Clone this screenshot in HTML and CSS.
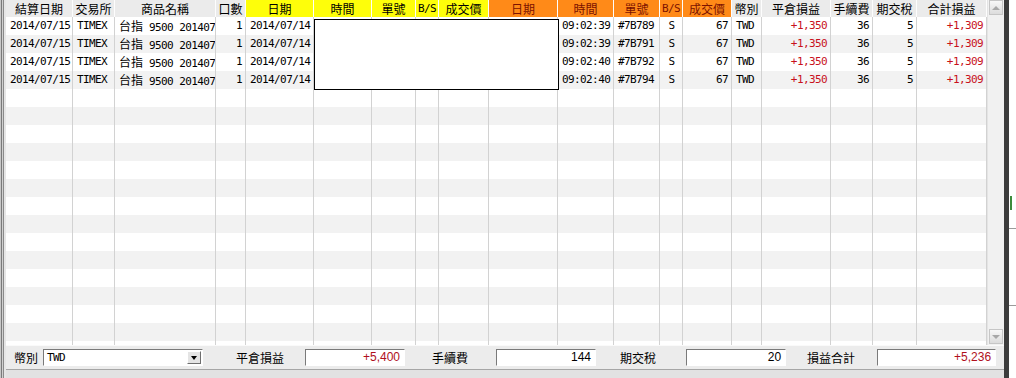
FILE: index.html
```html
<!DOCTYPE html>
<html lang="zh-TW">
<head>
  <meta charset="UTF-8" />
  <title>平倉明細</title>
  <link rel="stylesheet" href="styles.css">
</head>
<body>
  <div class="edge-left"></div>
  <div class="app">
    <div class="grid-area">
      <div class="grid" id="grid">
        <div class="row head">
          <div class="cell">結算日期</div>
          <div class="cell">交易所</div>
          <div class="cell">商品名稱</div>
          <div class="cell">口數</div>
          <div class="cell yel">日期</div>
          <div class="cell yel">時間</div>
          <div class="cell yel">單號</div>
          <div class="cell yel mono">B/S</div>
          <div class="cell yel">成交價</div>
          <div class="cell org">日期</div>
          <div class="cell org">時間</div>
          <div class="cell org">單號</div>
          <div class="cell org mono">B/S</div>
          <div class="cell org">成交價</div>
          <div class="cell">幣別</div>
          <div class="cell">平倉損益</div>
          <div class="cell">手續費</div>
          <div class="cell">期交稅</div>
          <div class="cell">合計損益</div>
        </div>
        <div id="rows"></div>
        <div class="blank-box"></div>
      </div>
      <div class="vscroll">
        <div class="sbtn up"><span class="tri-up"></span></div>
        <div class="strack"></div>
        <div class="sbtn down"><span class="tri-down"></span></div>
      </div>
    </div>
    <div class="footer">
      <span class="lbl first">幣別</span>
      <div class="combo">
        <span class="combo-text">TWD</span>
        <span class="combo-btn"><span class="tri-down dark"></span></span>
      </div>
      <span class="lbl l-pnl">平倉損益</span>
      <div class="box red w100 i-pnl">+5,400</div>
      <span class="lbl l-fee">手續費</span>
      <div class="box w100 i-fee">144</div>
      <span class="lbl l-tax">期交稅</span>
      <div class="box w100 i-tax">20</div>
      <span class="lbl l-sum">損益合計</span>
      <div class="box red w119 i-sum">+5,236</div>
    </div>
    <div class="status"></div>
  </div>
  <div class="edge-right">
    <div class="side-pane"><span class="mark"></span></div>
  </div>

  <script>
    // 平倉資料
    const trades = [
      { time: '09:02:39', no: '#7B789' },
      { time: '09:02:39', no: '#7B791' },
      { time: '09:02:40', no: '#7B792' },
      { time: '09:02:40', no: '#7B794' }
    ];
    const rows = document.getElementById('rows');
    for (let i = 0; i < 19; i++) {
      const t = trades[i];
      const div = document.createElement('div');
      div.className = 'row' + (i % 2 ? ' alt' : '');
      if (t) {
        div.innerHTML = `
          <div class="cell">2014/07/15</div>
          <div class="cell">TIMEX</div>
          <div class="cell"><span class="cjk">台指</span> 9500 201407</div>
          <div class="cell r">1</div>
          <div class="cell">2014/07/14</div>
          <div class="cell"></div>
          <div class="cell"></div>
          <div class="cell"></div>
          <div class="cell"></div>
          <div class="cell"></div>
          <div class="cell">${t.time}</div>
          <div class="cell">${t.no}</div>
          <div class="cell c">S</div>
          <div class="cell r">67</div>
          <div class="cell">TWD</div>
          <div class="cell r red">+1,350</div>
          <div class="cell r">36</div>
          <div class="cell r">5</div>
          <div class="cell r red">+1,309</div>`;
      } else {
        div.innerHTML = '<div class="cell"></div>'.repeat(19);
      }
      rows.appendChild(div);
    }
  </script>
</body>
</html>
```

FILE: styles.css
```css
html, body {
  margin: 0;
  padding: 0;
}
body {
  width: 1016px;
  height: 378px;
  overflow: hidden;
  display: flex;
  background-color: #dedede;
  font-family: "DejaVu Sans Mono", "Noto Sans CJK TC", monospace;
  font-size: 11px;
  color: #000;
}

/* 左右邊框 */
.edge-left {
  width: 6px;
  flex: none;
  background: linear-gradient(to right,
    #c8c8c8 0, #c8c8c8 1px,
    #7a7a7a 1px, #7a7a7a 2px,
    #d0d0d0 2px, #d0d0d0 3px,
    #8a8a8a 3px, #8a8a8a 4px,
    #e6e6e6 4px, #e6e6e6 6px);
}
.edge-right {
  flex: 1;
  display: flex;
  background: #3c3c3c;
  padding-left: 5px;
}
.side-pane {
  flex: 1;
  position: relative;
  background: linear-gradient(to bottom,
    #ffffff 0, #ffffff 228px,
    #9a9a9a 228px, #9a9a9a 229px,
    #ffffff 229px, #ffffff 305px,
    #9a9a9a 305px, #9a9a9a 306px,
    #ffffff 306px);
}
.side-pane .mark {
  position: absolute;
  left: 1px;
  top: 196px;
  width: 2px;
  height: 14px;
  background: #3c8c3c;
}

.app {
  width: 998px;
  flex: none;
  display: flex;
  flex-direction: column;
}

/* 表格區 */
.grid-area {
  height: 345px;
  display: flex;
  background: #fff;
}
.grid {
  width: 981px;
  position: relative;
  overflow: hidden;
}
.row {
  display: grid;
  grid-template-columns: 67px 42px 101px 30px 68px 58px 44px 23px 50px 69px 56px 46px 23px 49px 30px 69px 42px 44px 70px;
  height: 18px;
  background: #fff;
}
.row.alt {
  background: #f2f2f2;
}
.cell {
  box-sizing: border-box;
  border-right: 1px solid #d2d2d2;
  padding: 0 3px 0 4px;
  line-height: 18px;
  white-space: nowrap;
  overflow: hidden;
  letter-spacing: -0.6px;
}
.cell.r { text-align: right; }
.cell.c { text-align: center; }
.cell.red { color: #c8101c; }
.cjk {
  font-family: "Noto Sans CJK TC", sans-serif;
  font-size: 12px;
  letter-spacing: 0;
}

.row.head {
  height: 17px;
  background: #ebebeb;
}
.row.head .cell {
  font-family: "Noto Sans CJK TC", sans-serif;
  font-size: 12px;
  letter-spacing: 0;
  line-height: 17px;
  text-align: center;
  padding: 0;
  border-right: 1px solid #fdfdfd;
}
.row.head .cell.mono {
  font-family: "DejaVu Sans Mono", monospace;
  font-size: 11px;
  letter-spacing: -0.6px;
}
.row.head .yel {
  background: #fefe0a;
}
.row.head .org {
  background: #ff8a18;
  color: #7c1200;
}

.blank-box {
  position: absolute;
  left: 308px;
  top: 19px;
  width: 245px;
  height: 71px;
  box-sizing: border-box;
  border: 1px solid #000;
  background: #fff;
}

/* 捲軸 */
.vscroll {
  width: 17px;
  display: flex;
  flex-direction: column;
  background: #f1f1f1;
  border-left: 1px solid #e4e4e4;
  box-sizing: border-box;
}
.strack { flex: 1; }
.sbtn {
  height: 15px;
  margin: 0 1px;
  box-sizing: border-box;
  border: 1px solid #c6c6c6;
  background: linear-gradient(#f8f8f8, #dcdcdc);
  display: flex;
  align-items: center;
  justify-content: center;
}
.sbtn.down { margin-bottom: 1px; }
.tri-up {
  width: 0;
  height: 0;
  border-left: 4px solid transparent;
  border-right: 4px solid transparent;
  border-bottom: 4px solid #a8a8a8;
}
.tri-down {
  width: 0;
  height: 0;
  border-left: 4px solid transparent;
  border-right: 4px solid transparent;
  border-top: 4px solid #a8a8a8;
}
.tri-down.dark {
  border-top-color: #000;
  border-left-width: 3px;
  border-right-width: 3px;
}

/* 合計列 */
.footer {
  height: 23px;
  display: flex;
  align-items: center;
  background: #ececec;
  border-top: 1px solid #fafafa;
}
.lbl {
  font-family: "Noto Sans CJK TC", sans-serif;
  font-size: 12px;
  line-height: 16px;
}
.lbl.first { margin-left: 8px; }
.l-pnl { margin-left: 33px; }
.l-fee { margin-left: 27px; }
.l-tax { margin-left: 24px; }
.l-sum { margin-left: 21px; }

.combo {
  margin-left: 5px;
  width: 160px;
  height: 17px;
  box-sizing: border-box;
  border-top: 1px solid #7a7a7a;
  border-left: 1px solid #7a7a7a;
  border-right: 1px solid #fff;
  border-bottom: 1px solid #fff;
  background: #fff;
  display: flex;
  align-items: center;
  justify-content: space-between;
}
.combo-text {
  padding-left: 3px;
  letter-spacing: -0.6px;
}
.combo-btn {
  width: 14px;
  height: 13px;
  margin-right: 1px;
  box-sizing: border-box;
  background: #e4e4e4;
  border-top: 1px solid #fff;
  border-left: 1px solid #fff;
  border-right: 1px solid #6e6e6e;
  border-bottom: 1px solid #6e6e6e;
  display: flex;
  align-items: center;
  justify-content: center;
}

.box {
  height: 17px;
  box-sizing: border-box;
  border-top: 1px solid #7a7a7a;
  border-left: 1px solid #7a7a7a;
  border-right: 1px solid #fff;
  border-bottom: 1px solid #fff;
  background: #fff;
  font-family: "Liberation Sans", Arial, sans-serif;
  font-size: 12px;
  line-height: 15px;
  text-align: right;
  padding-right: 4px;
}
.box.red { color: #b0101c; }
.w100 { width: 100px; }
.w119 { width: 119px; }
.i-pnl { margin-left: 21px; }
.i-fee { margin-left: 28px; }
.i-tax { margin-left: 30px; }
.i-sum { margin-left: 22px; }

.status {
  flex: 1;
  border-top: 1px solid #a6a6a6;
  background: #e2e2e2;
}
```
